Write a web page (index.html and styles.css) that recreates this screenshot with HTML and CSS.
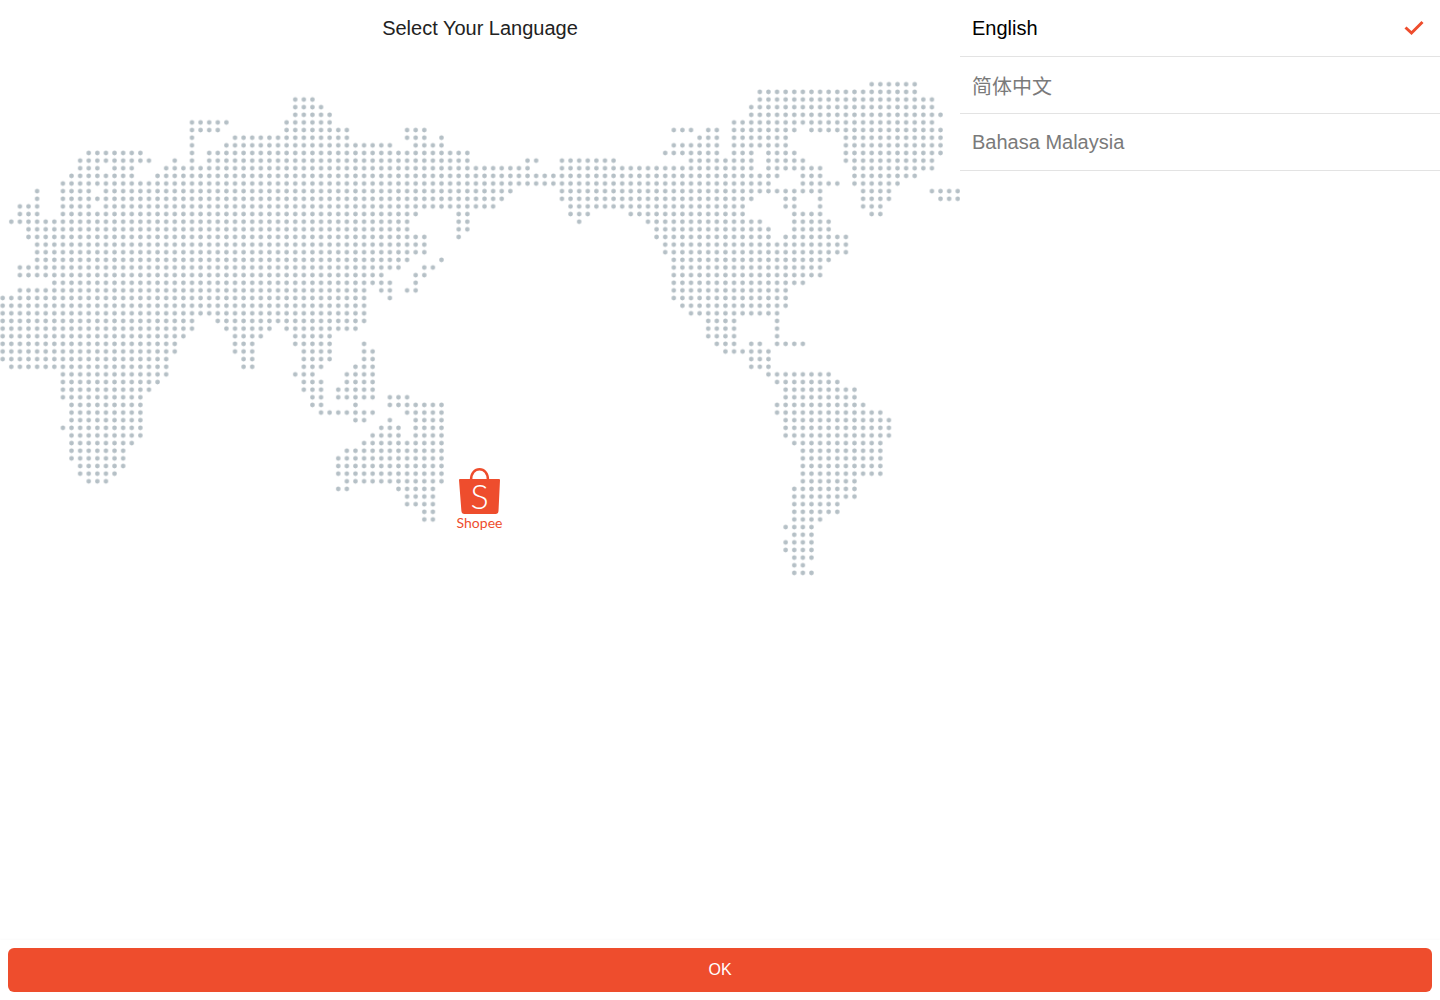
FILE: index.html
```html
<!DOCTYPE html>
<html lang="en">
<head>
<meta charset="utf-8">
<meta name="viewport" content="width=device-width, initial-scale=1">
<title>Select Your Language</title>
<link rel="stylesheet" href="styles.css">
</head>
<body>
<main class="page">
  <section class="intro">
    <h1 class="title">Select Your Language</h1>
    <svg class="map" viewBox="0 0 960 530" aria-hidden="true">
      <defs>
        <pattern id="dots" patternUnits="userSpaceOnUse" x="0" y="-.5" width="1" height="1">
          <ellipse cx=".5" cy=".5" rx=".27" ry=".3" fill="#b5c0c6"/>
        </pattern>
      </defs>
      <!-- One run per stretch of land: column, row, number of dots -->
      <g transform="translate(-1.6 28.3) scale(8.604 7.635)">
        <path fill="none" stroke="url(#dots)" stroke-width="1" d="
          M101 0h6
          M88 1h19
          M34 2h3M88 2h21
          M34 3h4M87 3h22
          M34 4h5M87 4h23
          M22 5h5M33 5h6M85 5h24
          M22 6h4M33 6h8M47 6h3M78 6h3M82 6h2M85 6h8M94 6h16
          M22 7h1M27 7h14M47 7h3M51 7h1M81 7h3M85 7h7M98 7h12
          M22 8h1M26 8h20M48 8h4M78 8h6M85 8h7M98 8h12
          M10 9h7M22 9h1M24 9h31M77 9h7M85 9h3M89 9h4M98 9h12
          M9 10h9M20 10h1M22 10h1M24 10h31M61 10h2M65 10h7M80 10h8M89 10h5M98 10h11
          M9 11h3M13 11h3M19 11h43M65 11h23M89 11h7M99 11h10
          M8 12h8M18 12h73M93 12h3M99 12h8
          M7 13h83M93 13h5M99 13h6
          M4 14h1M7 14h4M12 14h48M65 14h31M100 14h4M108 14h4
          M4 15h1M7 15h52M65 15h23M91 15h2M95 15h1M100 15h4M109 15h3
          M2 16h3M7 16h4M12 16h46M66 16h21M91 16h2M95 16h1M100 16h3
          M2 17h3M7 17h42M53 17h2M66 17h3M73 17h14M92 17h4M101 17h2
          M1 18h47M53 18h2M67 18h1M75 18h14M92 18h5
          M3 19h45M53 19h2M76 19h14M92 19h5
          M3 20h47M53 20h1M76 20h14M91 20h8
          M4 21h46M77 21h22
          M4 22h46M77 22h22
          M4 23h44M51 23h1M78 23h19
          M2 24h45M49 24h2M78 24h18
          M2 25h43M48 25h2M78 25h18
          M6 26h40M48 26h1M78 26h16
          M2 27h41M44 27h2M47 27h2M78 27h14
          M0 28h43M45 28h1M78 28h14
          M0 29h43M79 29h13
          M0 30h43M80 30h11
          M0 31h23M25 31h18M82 31h4M90 31h1
          M0 32h23M26 32h6M33 32h9M82 32h4M90 32h1
          M0 33h22M27 33h4M34 33h5M82 33h4M90 33h1
          M0 34h21M27 34h3M34 34h5M42 34h1M83 34h3M87 34h2M90 34h4
          M0 35h21M27 35h3M35 35h4M42 35h2M84 35h6
          M0 36h20M28 36h2M35 36h4M42 36h2M87 36h3
          M1 37h19M28 37h2M35 37h3M41 37h3M87 37h3
          M7 38h13M34 38h3M40 38h4M89 38h8
          M7 39h12M35 39h3M40 39h4M90 39h8
          M7 40h11M35 40h3M39 40h5M91 40h9
          M7 41h10M36 41h2M39 41h5M45 41h3M91 41h9
          M8 42h9M36 42h2M41 42h1M45 42h7M90 42h11
          M8 43h9M37 43h7M47 43h5M90 43h13
          M8 44h9M41 44h2M45 44h1M48 44h4M91 44h13
          M7 45h10M44 45h3M48 45h4M91 45h13
          M8 46h9M43 46h4M48 46h4M91 46h13
          M8 47h8M42 47h10M92 47h11
          M8 48h7M40 48h12M93 48h10
          M8 49h7M39 49h13M93 49h10
          M9 50h6M39 50h13M93 50h10
          M9 51h5M39 51h13M93 51h10
          M10 52h3M40 52h12M93 52h7
          M39 53h2M46 53h5M92 53h8
          M47 54h4M92 54h8
          M47 55h4M92 55h6
          M49 56h2M92 56h6
          M49 57h2M92 57h4
          M91 58h4
          M92 59h3
          M91 60h4
          M91 61h4
          M92 62h3
          M92 63h2
          M92 64h3"/>
      </g>
    </svg>
    <svg class="logo" viewBox="0 0 48 66" role="img" aria-label="Shopee">
      <path class="logo-handle" d="M15 13C15 6 19 2.300 23.500 2.300S32 6 32 13"/>
      <path class="logo-bag" d="M4 12H43Q44 12 44 13L42.500 44Q42.300 47 39.500 47H8.500Q5.600 47 5.400 44L3 13Q3 12 4 12Z"/>
      <text class="logo-letter" x="23.500" y="42">S</text>
      <text class="logo-name" x="23.500" y="61">Shopee</text>
    </svg>
  </section>
  <form class="languages" id="language-form">
    <label class="option">
      <input class="option-input" type="radio" name="language" value="en" checked>
      <span class="option-name">English</span>
      <svg class="option-check" viewBox="0 0 20 20" aria-hidden="true"><path d="M1.500 9.500L7.500 15L18.500 4"/></svg>
    </label>
    <label class="option">
      <input class="option-input" type="radio" name="language" value="zh-Hans">
      <span class="option-name" lang="zh-Hans">简体中文</span>
      <svg class="option-check" viewBox="0 0 20 20" aria-hidden="true"><path d="M1.500 9.500L7.500 15L18.500 4"/></svg>
    </label>
    <label class="option">
      <input class="option-input" type="radio" name="language" value="ms">
      <span class="option-name" lang="ms">Bahasa Malaysia</span>
      <svg class="option-check" viewBox="0 0 20 20" aria-hidden="true"><path d="M1.500 9.500L7.500 15L18.500 4"/></svg>
    </label>
  </form>
</main>
<footer class="actions">
  <button class="ok" type="submit" form="language-form">OK</button>
</footer>
</body>
</html>
```

FILE: styles.css
```css
* {
  box-sizing: border-box;
}

body {
  margin: 0;
  background: #fff;
  color: #222;
  font-family: "Liberation Sans", "Noto Sans CJK SC", sans-serif;
}

.page {
  display: grid;
  grid-template-columns: 2fr 1fr;
  min-height: 100vh;
}

.intro {
  display: grid;
  grid-template-rows: 56px 1fr;
}

.title {
  grid-area: 1 / 1;
  margin: 0;
  font-size: 20px;
  font-weight: 400;
  line-height: 56px;
  text-align: center;
}

.map {
  grid-area: 2 / 1;
  display: block;
  width: 100%;
}

.logo {
  grid-area: 1 / 1 / 3 / 2;
  place-self: center;
  width: 48px;
  height: 66px;
}

.logo-handle {
  fill: none;
  stroke: #ee4d2d;
  stroke-width: 2.500;
}

.logo-bag {
  fill: #ee4d2d;
}

.logo-letter {
  fill: #fff;
  font: 300 34px Lato, sans-serif;
  text-anchor: middle;
}

.logo-name {
  fill: #ee4d2d;
  font: 14px Lato, sans-serif;
  text-anchor: middle;
}

.option {
  position: relative;
  display: flex;
  align-items: center;
  justify-content: space-between;
  height: 57px;
  padding: 0 16px 0 12px;
  border-bottom: 1px solid #e3e3e3;
  color: #7a7a7a;
  font-size: 20px;
  cursor: pointer;
}

.option:has(.option-input:checked) {
  color: #000;
}

.option-input {
  position: absolute;
  inset: 0;
  width: 100%;
  height: 100%;
  margin: 0;
  opacity: 0;
  cursor: pointer;
}

.option-check {
  width: 20px;
  height: 20px;
  fill: none;
  stroke: #ee4d2d;
  stroke-width: 3;
  visibility: hidden;
}

.option-input:checked ~ .option-check {
  visibility: visible;
}

.actions {
  position: fixed;
  inset: auto 0 0;
  padding: 8px;
  background: #fff;
  box-shadow: 0 -1px 2px rgba(0, 0, 0, 0.02);
}

.ok {
  display: block;
  width: 100%;
  height: 44px;
  padding: 0;
  border: 0;
  border-radius: 6px;
  background: #ee4d2d;
  color: #fff;
  font: inherit;
  font-size: 16px;
  cursor: pointer;
}
```
